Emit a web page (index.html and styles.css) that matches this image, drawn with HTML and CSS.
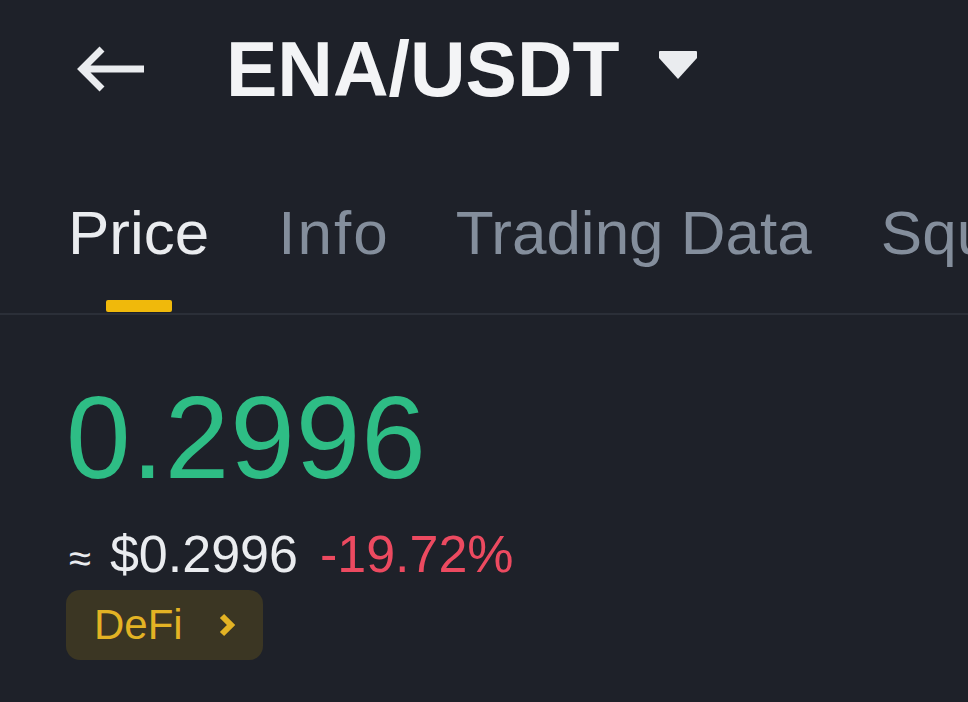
FILE: index.html
```html
<html>
    <head>
        <title>ENA/USDT</title>
        <meta name="viewport" content="width=device-width">
        <link rel="stylesheet" href="styles.css">
    </head>
    <body>
        <div class="header">
            <svg class="back" width="68" height="46" viewBox="0 0 68 46">
                <path d="M5 23 H67 M25 3 L5 23 L25 43" fill="none" stroke="#eaecef" stroke-width="7" stroke-linejoin="miter" stroke-linecap="butt"/>
            </svg>
            <div class="pair">ENA/USDT</div>
            <svg class="caret" width="42" height="32" viewBox="0 0 42 32">
                <path d="M3 2 H39 Q40 2 40 3 V9 L21 30 L2 9 V3 Q2 2 3 2 Z" fill="#eaecef"/>
            </svg>
        </div>

        <div class="tabs">
            <div class="tab active">
                <span>Price</span>
                <div class="bar"></div>
            </div>
            <div class="tab"><span>Info</span></div>
            <div class="tab"><span>Trading Data</span></div>
            <div class="tab"><span>Square</span></div>
        </div>

        <div class="quote">
            <div class="last">0.2996</div>
            <div class="sub">
                <span class="approx">&asymp;</span><span class="usd">$0.2996</span><span class="change">-19.72%</span>
            </div>
            <div class="tag">
                <span>DeFi</span>
                <svg width="22" height="26" viewBox="0 0 22 26">
                    <path d="M6 4 L15 13 L6 22" fill="none" stroke="#e3b324" stroke-width="6"/>
                </svg>
            </div>
        </div>
    </body>
</html>
```

FILE: styles.css
```css
body {
    margin: 0;
    background-color: #1e2129;
    font-family: "Liberation Sans", Arial, sans-serif;
    color: #eaecef;
    overflow: hidden;
}
.header {
    display: flex;
    align-items: center;
    height: 138px;
    padding-left: 77px;
}
.back {
    display: block;
}
.pair {
    font-size: 77px;
    line-height: 77px;
    font-weight: bold;
    margin-left: 81px;
    color: #f3f4f6;
}
.caret {
    display: block;
    margin-left: 37px;
    margin-top: -8px;
}
.tabs {
    display: flex;
    gap: 69px;
    margin-top: 59px;
    padding-left: 68px;
    border-bottom: 2px solid #2b2f38;
    white-space: nowrap;
    overflow: hidden;
}
.tab {
    display: flex;
    flex-direction: column;
    align-items: center;
    font-size: 62px;
    line-height: 72px;
    color: #848e9c;
    flex-shrink: 0;
}
.tab:nth-child(2) {
    letter-spacing: 2px;
    margin-right: -3px;
}
.tab.active {
    color: #eaecef;
}
.bar {
    width: 66px;
    height: 12px;
    margin-top: 31px;
    margin-bottom: 1px;
    border-radius: 2px;
    background-color: #f0b90b;
}
.quote {
    padding-left: 66px;
}
.last {
    font-size: 116px;
    line-height: 116px;
    letter-spacing: 1px;
    margin-top: 65px;
    color: #2ebd85;
}
.sub {
    display: flex;
    align-items: baseline;
    font-size: 52px;
    line-height: 52px;
    margin-top: 32px;
}
.approx {
    font-size: 40px;
    margin-left: 3px;
    margin-right: 19px;
}
.change {
    margin-left: 22px;
    color: #ec4a60;
}
.tag {
    display: inline-flex;
    align-items: center;
    gap: 33px;
    height: 70px;
    width: 197px;
    box-sizing: border-box;
    margin-top: 6px;
    padding-left: 28px;
    border-radius: 14px;
    background-color: #3b3623;
    color: #e3b324;
    font-size: 42px;
}
.tag svg {
    display: block;
}
```
